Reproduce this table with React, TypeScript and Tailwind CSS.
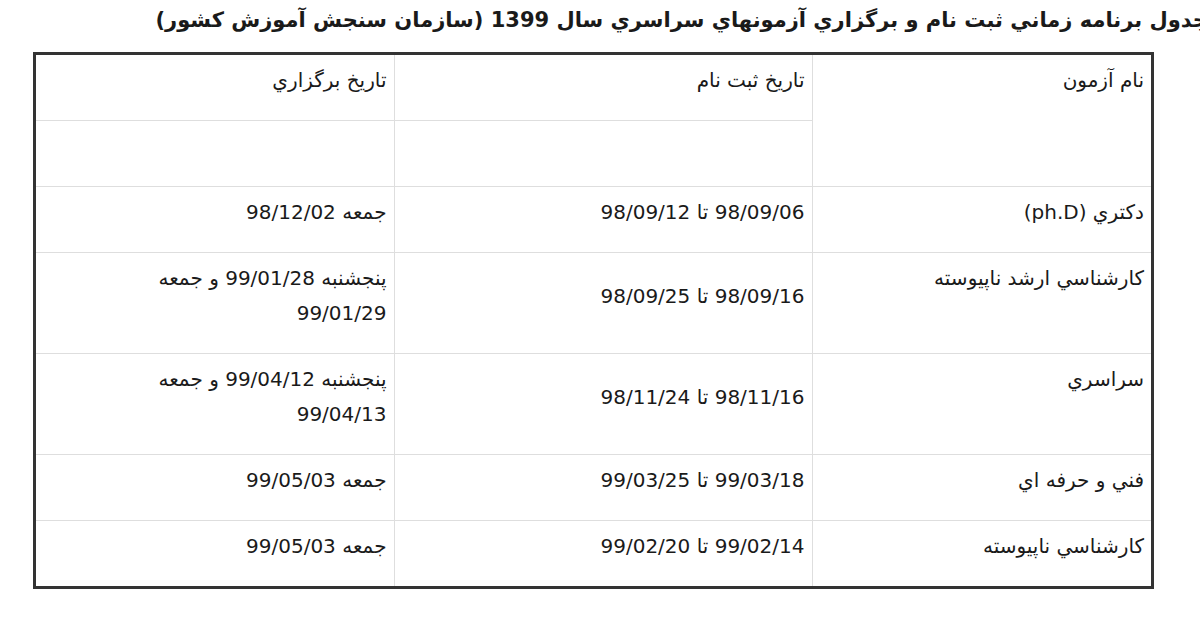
import React from 'react';

interface ExamRow {
  name: string;
  register: string;
  held: string[];
}

const rows: ExamRow[] = [
  { name: 'دکتري (ph.D)', register: '98/09/06 تا 98/09/12', held: ['جمعه 98/12/02'] },
  { name: 'كارشناسي ارشد ناپيوسته', register: '98/09/16 تا 98/09/25', held: ['پنجشنبه 99/01/28 و جمعه', '99/01/29'] },
  { name: 'سراسري', register: '98/11/16 تا 98/11/24', held: ['پنجشنبه 99/04/12 و جمعه', '99/04/13'] },
  { name: 'فني و حرفه اي', register: '99/03/18 تا 99/03/25', held: ['جمعه 99/05/03'] },
  { name: 'كارشناسي ناپيوسته', register: '99/02/14 تا 99/02/20', held: ['جمعه 99/05/03'] },
];

const cell = 'px-[7px] pt-[8px] pb-[22px] text-right leading-[35px] align-middle border-[#dedede]';

const App: React.FC = () => {
  return (
    <div
      dir="rtl"
      className="w-[1200px] h-[618px] overflow-hidden bg-white text-[#1a1a1a]"
      style={{ fontFamily: '"DejaVu Sans", Tahoma, sans-serif' }}
    >
      <div className="flex justify-start mr-[-8px] h-[52px] pt-[6px]">
        <h1 className="text-[21px] font-bold leading-[28px] whitespace-nowrap">
          جدول برنامه زماني ثبت نام و برگزاري آزمونهاي سراسري سال 1399 (سازمان سنجش آموزش كشور)
        </h1>
      </div>

      <div className="mr-[46px] w-[1121px] border-[3px] border-[#333]">
        <table className="w-full table-fixed border-collapse text-[20px]">
          <colgroup>
            <col className="w-[339px]" />
            <col className="w-[418px]" />
            <col className="w-[358px]" />
          </colgroup>
          <tbody>
            <tr>
              <td rowSpan={2} className={`${cell} align-top border-l border-b`}>نام آزمون</td>
              <td className={`${cell} border-l border-b`}>تاريخ ثبت نام</td>
              <td className={`${cell} border-b`}>تاريخ برگزاري</td>
            </tr>
            <tr>
              <td className={`${cell} border-l border-b`}>&nbsp;</td>
              <td className={`${cell} border-b`}>&nbsp;</td>
            </tr>
            {rows.map((row, i) => {
              const last = i === rows.length - 1;
              return (
                <tr key={row.name}>
                  <td className={`${cell} !align-top border-l ${last ? '' : 'border-b'}`}>{row.name}</td>
                  <td className={`${cell} border-l ${last ? '' : 'border-b'}`}>{row.register}</td>
                  <td className={`${cell} ${last ? '' : 'border-b'}`}>
                    {row.held.map((line) => (
                      <div key={line}>{line}</div>
                    ))}
                  </td>
                </tr>
              );
            })}
          </tbody>
        </table>
      </div>
    </div>
  );
};

export default App;
